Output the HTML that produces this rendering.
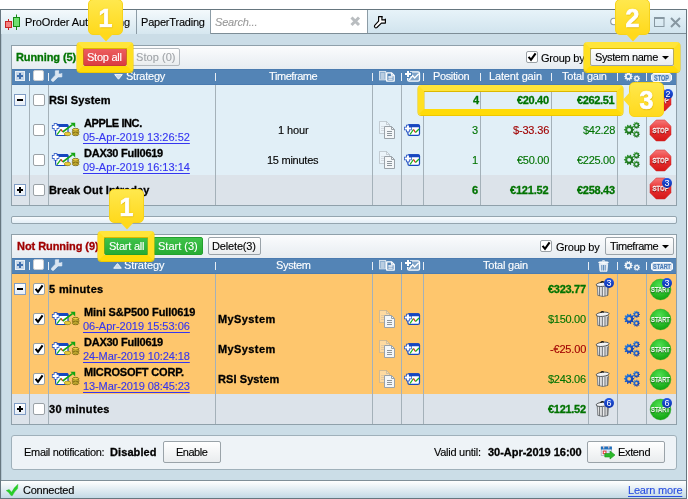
<!DOCTYPE html><html><head><meta charset="utf-8"><title>ProOrder AutoTrading</title><style>
*{box-sizing:border-box;margin:0;padding:0}
html,body{width:688px;height:499px;background:#fff;overflow:hidden}
body{font-family:"Liberation Sans",sans-serif;font-size:11px;color:#000;position:relative;line-height:13px}
.a{position:absolute}
.t{position:absolute;white-space:nowrap;line-height:13px;height:13px;-webkit-text-stroke:0.12px;will-change:transform}
.b{font-weight:bold;-webkit-text-stroke:0.3px}
.w{color:#fff}
.g{color:#007300}
.r{color:#a00000}
.lk{color:#3535f0;text-decoration:underline;text-decoration-thickness:1px;text-underline-offset:1.5px}
#win{left:0;top:9px;width:687px;height:490px;background:#cbdde7;border:1px solid #66767f}
.panel{position:absolute;border:1px solid #8fa0aa;background:#e1eff7}
.tb{position:absolute;left:0;top:0;width:100%;height:23px;background:linear-gradient(#fbfcfd,#e6ecf1)}
.hd{position:absolute;left:0;top:23px;width:100%;height:16px;background:#5384b6;border-top:1px solid #4a7bb0;border-bottom:1px solid #4a7bb0}
.row{position:absolute;left:0;width:100%;height:30px}
.cl{position:absolute;top:39px;width:1px;background:#a4b1b9}
.tick{position:absolute;width:1px;height:8px;background:#e8eef5}
.btn{position:absolute;height:18px;border:1px solid #9aa3a9;border-radius:2px;background:linear-gradient(#ffffff,#e9ecee)}
.cb{position:absolute;width:12px;height:12px;border:1px solid #9aa1a6;border-radius:2px;background:#fff}
.ex{position:absolute;width:12px;height:12px;border:1px solid #7f9cc4;background:linear-gradient(#ffffff,#e6eef8)}
.hl{position:absolute;border:6px solid #ffe022;border-top-color:#ffe53a;border-bottom-color:#ffdb08;border-radius:3.5px;box-shadow:0 0.5px 0 0.5px #efc800, inset 0 0.6px 0 0.4px #dcb800}
.co{position:absolute;width:35px;border-radius:5px;background:linear-gradient(#ffe84d,#ffd91c);border:1px solid #f7d31a;color:#fff;font-weight:bold;font-size:25px;text-align:center;text-shadow:0.5px 1px 1px #dfb400,0 0 2px #e8c000;-webkit-text-stroke:0.7px #fff}
svg{position:absolute;overflow:visible}
</style></head><body>
<svg width="0" height="0" style="position:absolute"><defs>
<linearGradient id="gStop" x1="0" y1="0" x2="0" y2="1"><stop offset="0" stop-color="#f67878"/><stop offset="0.5" stop-color="#e83030"/><stop offset="1" stop-color="#d41818"/></linearGradient>
<radialGradient id="gStart" cx="0.45" cy="0.3" r="0.75"><stop offset="0" stop-color="#4fe04f"/><stop offset="1" stop-color="#0da00d"/></radialGradient>
<linearGradient id="gBlue" x1="0" y1="0" x2="1" y2="1"><stop offset="0" stop-color="#2f93e6"/><stop offset="0.55" stop-color="#1550c4"/><stop offset="1" stop-color="#0a2a9c"/></linearGradient>
<linearGradient id="gGreen" x1="0" y1="0" x2="1" y2="1"><stop offset="0" stop-color="#3da53d"/><stop offset="0.55" stop-color="#1f7a1f"/><stop offset="1" stop-color="#0f5a0f"/></linearGradient>
<linearGradient id="gBadge" x1="0" y1="0" x2="0" y2="1"><stop offset="0" stop-color="#2458e6"/><stop offset="1" stop-color="#0b2fa8"/></linearGradient>
<linearGradient id="gCan" x1="0" y1="0" x2="1" y2="0"><stop offset="0" stop-color="#8d9195"/><stop offset="0.35" stop-color="#e6e8ea"/><stop offset="1" stop-color="#84888c"/></linearGradient>
<g id="stopsign"><polygon points="6.2,0 14.8,0 21,6.2 21,14.8 14.8,21 6.2,21 0,14.8 0,6.2" fill="url(#gStop)" stroke="#cf2424" stroke-width="0.5"/><text x="10.6" y="13.3" font-family="Liberation Sans,sans-serif" font-weight="bold" font-size="7.5" fill="#fff" stroke="#fff" stroke-width="0.35" text-anchor="middle" textLength="16" style="text-shadow:0 0.6px 0.4px #901010" lengthAdjust="spacingAndGlyphs">STOP</text></g>
<g id="startsign"><circle cx="10.5" cy="10.5" r="10.4" fill="url(#gStart)" stroke="#12a012" stroke-width="0.4"/><text x="10.5" y="13.1" font-family="Liberation Sans,sans-serif" font-weight="bold" font-size="7.8" fill="#fff" stroke="#fff" stroke-width="0.25" text-anchor="middle" textLength="18.8" style="text-shadow:0 0.6px 0.4px #087008" lengthAdjust="spacingAndGlyphs">START</text></g>
<g id="gear"><path d="M0.766,-0.146 L0.994,-0.107 L0.994,0.107 L0.766,0.146 L0.706,0.332 L0.867,0.498 L0.742,0.671 L0.534,0.569 L0.376,0.684 L0.409,0.913 L0.206,0.979 L0.098,0.774 L-0.098,0.774 L-0.206,0.979 L-0.409,0.913 L-0.376,0.684 L-0.534,0.569 L-0.742,0.671 L-0.867,0.498 L-0.706,0.332 L-0.766,0.146 L-0.994,0.107 L-0.994,-0.107 L-0.766,-0.146 L-0.706,-0.332 L-0.867,-0.498 L-0.742,-0.671 L-0.534,-0.569 L-0.376,-0.684 L-0.409,-0.913 L-0.206,-0.979 L-0.098,-0.774 L0.098,-0.774 L0.206,-0.979 L0.409,-0.913 L0.376,-0.684 L0.534,-0.569 L0.742,-0.671 L0.867,-0.498 L0.706,-0.332 Z M0.37,0 A0.37,0.37 0 1 0 -0.37,0 A0.37,0.37 0 1 0 0.37,0 Z" fill-rule="evenodd"/></g>
<g id="gearS"><path d="M0.724,-0.154 L0.993,-0.118 L0.993,0.118 L0.724,0.154 L0.653,0.347 L0.837,0.548 L0.685,0.729 L0.456,0.583 L0.277,0.686 L0.289,0.957 L0.056,0.998 L-0.026,0.740 L-0.229,0.704 L-0.394,0.919 L-0.599,0.801 L-0.495,0.550 L-0.628,0.392 L-0.893,0.451 L-0.974,0.228 L-0.733,0.103 L-0.733,-0.103 L-0.974,-0.228 L-0.893,-0.451 L-0.628,-0.392 L-0.495,-0.550 L-0.599,-0.801 L-0.394,-0.919 L-0.229,-0.704 L-0.026,-0.740 L0.056,-0.998 L0.289,-0.957 L0.277,-0.686 L0.456,-0.583 L0.685,-0.729 L0.837,-0.548 L0.653,-0.347 Z M0.34,0 A0.34,0.34 0 1 0 -0.34,0 A0.34,0.34 0 1 0 0.34,0 Z" fill-rule="evenodd"/></g>
<g id="gears"><use href="#gear" transform="translate(5.1,7.8) scale(5.2)"/><use href="#gearS" transform="translate(12.4,3.4) scale(3.6)"/><use href="#gearS" transform="translate(12.4,12.2) scale(3.6)"/></g>
<g id="copyic"><path d="M0.5,0.5 H7.5 L10.5,3.5 V12.5 H0.5 Z" fill="#fff" fill-opacity="0.35" stroke="#9aa0a6" stroke-opacity="0.45" stroke-width="1"/><path d="M7.5,0.5 V3.5 H10.5" fill="none" stroke="#9aa0a6" stroke-opacity="0.45"/><path d="M2,5.5 H5 M2,7.5 H5 M2,9.5 H5" stroke="#9aa0a6" stroke-opacity="0.3"/><path d="M5.5,5.5 H12.5 L15.5,8.5 V17.5 H5.5 Z" fill="#f4f7f9" stroke="#9aa2a9" stroke-width="1"/><path d="M12.5,5.5 V8.5 H15.5" fill="none" stroke="#9aa2a9"/><path d="M8,10.5 H13 M8,12.5 H13 M8,14.5 H13" stroke="#8e969c" stroke-width="1"/></g>
<g id="chartplus"><rect x="3.9" y="0.8" width="11.6" height="10.6" rx="1.6" fill="#fff" stroke="#1747c0" stroke-width="1.2"/><path d="M3.9,2.6 V2.2 Q3.9,0.8 5.3,0.8 H14.1 Q15.5,0.8 15.5,2.2 V2.6 Z" fill="#1747c0" stroke="#1747c0" stroke-width="1.2"/><path d="M6,10.5 L9.5,5.5" fill="none" stroke="#18b018" stroke-width="1.3"/><path d="M9.5,5.5 L11.5,8.5" fill="none" stroke="#e82020" stroke-width="1.3"/><path d="M11.5,8.5 L15,5" fill="none" stroke="#18b018" stroke-width="1.3"/><path d="M3.9,0.7 V8.3 M0.1,4.5 H7.7" stroke="#1747c0" stroke-width="3.6"/><path d="M3.9,1.4 V7.6 M0.8,4.5 H7" stroke="#fff" stroke-width="2.1"/></g>
<g id="chartcoin"><rect x="3.6" y="2.5" width="12.4" height="11" rx="1.6" fill="#fff" stroke="#1747c0" stroke-width="1.2"/><path d="M3.6,4.3 V3.9 Q3.6,2.5 5,2.5 H14.6 Q16,2.5 16,3.9 V4.3 Z" fill="#1747c0" stroke="#1747c0" stroke-width="1.2"/><path d="M5,12.7 L9,7.3" fill="none" stroke="#18b018" stroke-width="1.3"/><path d="M9,7.3 L10.7,10" fill="none" stroke="#e82020" stroke-width="1.3"/><path d="M10.7,10 L20.5,2.6" fill="none" stroke="#12a512" stroke-width="1.6"/><path d="M18.4,0.7 H23.2 V5.4 Z" fill="#12a512"/><path d="M3.6,1.2 V8.6 M-0.1,4.9 H7.3" stroke="#1747c0" stroke-width="3.6"/><path d="M3.6,1.9 V7.9 M0.6,4.9 H6.6" stroke="#fff" stroke-width="2.1"/><ellipse cx="15.5" cy="11.9" rx="3.3" ry="1.8" fill="#e9cb3a" stroke="#8f7a10" stroke-width="0.6"/><g fill="#edd040" stroke="#5f5008" stroke-width="0.7"><ellipse cx="23.6" cy="12.3" rx="3.3" ry="1.4"/><ellipse cx="23.6" cy="10.8" rx="3.3" ry="1.4"/><ellipse cx="23.6" cy="9.3" rx="3.3" ry="1.4"/><ellipse cx="23.6" cy="7.8" rx="3.3" ry="1.4"/></g></g>
<g id="trash"><path d="M1.2,4.8 H12.6 L11.9,14.4 Q6.9,16.6 1.9,14.4 Z" fill="#e9eaeb" stroke="#55595d" stroke-width="0.7"/><path d="M3.6,6 V15 M6.3,6 V15.5 M9,6 V15.4 M11.3,6 V14.6" stroke="#5a5e62" stroke-width="0.9"/><path d="M1.6,6 V14.3" stroke="#8a8e92" stroke-width="0.8"/><ellipse cx="6.6" cy="3.3" rx="6.5" ry="2.1" transform="rotate(-6 6.6 3.3)" fill="#f2f3f4" stroke="#3a3e42" stroke-width="0.8"/><path d="M4.6,1.7 Q6,-0.3 7.8,1.2" fill="none" stroke="#111" stroke-width="1.3"/></g>
<g id="wrench"><path d="M4.6,0.65 L8.3,0.65 L8.3,1.1 L7.9,1.2 L7.9,3.9 L10.8,3.9 L11.4,3.2 L11.4,7.1 L7.4,7.1 L2.9,11.5 Q1.8,12.2 0.9,11.3 Q0,10.3 0.7,9.4 L4.6,5.2 Z" stroke-linejoin="round"/></g>
<g id="tick"><path d="M1.6,4.8 L4,7.8 L8.6,1.4" fill="none" stroke="#000" stroke-width="2.1"/></g>
</defs></svg>
<div id="win" class="a">
<div class="a" style="left:0px;top:0px;width:1px;height:488px;background:#b3c6d2"></div>
<div class="a" style="left:0px;top:0px;width:685px;height:24px;background:linear-gradient(#e7f3f9,#d1e4ee);border-bottom:1px solid #7d8d96"></div>
<div class="a" style="left:0px;top:0px;width:136px;height:24px;border-right:1px solid #8c9ca6;background:linear-gradient(#f3f9fc,#d6e7f0)"></div>
<div class="a" style="left:136px;top:0px;width:74px;height:24px;border-right:1px solid #8c9ca6;background:linear-gradient(#f3f9fc,#d6e7f0)"></div>
<svg style="left:4px;top:4px" width="18" height="18"><path d="M3.5,5 V16" stroke="#c02020" stroke-width="1"/><path d="M11.5,0.5 V16" stroke="#158a15" stroke-width="1"/><rect x="0.5" y="7.5" width="6" height="6" fill="#f58080" stroke="#c82424"/><rect x="8.5" y="3.5" width="6" height="9" fill="#70e070" stroke="#158a15"/></svg>
<div class="t " style="left:23.70px;top:6px;letter-spacing:-0.105px;">ProOrder AutoTrading</div>
<div class="t " style="left:140.40px;top:6px;letter-spacing:-0.205px;">PaperTrading</div>
<div class="a" style="left:210px;top:0px;width:157px;height:23px;background:#fff;border-right:1px solid #8c9ca6"></div>
<div class="t " style="left:213.90px;top:6px;letter-spacing:-0.188px;font-style:italic;color:#9a9a9a">Search...</div>
<svg style="left:349.4px;top:6px" width="11" height="11"><path d="M1.5,1.5 L9,9 M9,1.5 L1.5,9" stroke="#b9bdc0" stroke-width="3"/></svg>
<svg style="left:373px;top:6px" width="13" height="13"><use href="#wrench" fill="#fff" stroke="#000" stroke-width="1.15"/></svg>
<svg style="left:609px;top:7px" width="10" height="10"><circle cx="4" cy="4.5" r="3.3" fill="#fff" stroke="#8a9aa4" stroke-width="1.1"/></svg>
<svg style="left:653px;top:7px" width="11" height="11"><rect x="0.5" y="1" width="9.5" height="8.5" fill="none" stroke="#8797a1" stroke-width="1"/><path d="M0,1 H10.5" stroke="#8797a1" stroke-width="2"/></svg>
<svg style="left:669px;top:7px" width="11" height="11"><path d="M1,1 L10,10 M10,1 L1,10" stroke="#8797a1" stroke-width="2"/></svg>
<div class="panel" style="left:10px;top:35px;width:666px;height:161px">
<div class="tb"></div><div class="hd"></div>
<div class="row" style="left:0px;top:39px;height:90px;background:#e1eff7"></div>
<div class="row" style="left:0px;top:129px;height:30px;background:#dce3ea"></div>
<div class="cl" style="left:17px;top:39px;height:120px;"></div>
<div class="cl" style="left:36px;top:39px;height:120px;"></div>
<div class="cl" style="left:203px;top:39px;height:120px;"></div>
<div class="cl" style="left:360px;top:39px;height:120px;"></div>
<div class="cl" style="left:389px;top:39px;height:120px;"></div>
<div class="cl" style="left:411px;top:39px;height:120px;"></div>
<div class="cl" style="left:468px;top:39px;height:120px;"></div>
<div class="cl" style="left:539px;top:39px;height:120px;"></div>
<div class="cl" style="left:605px;top:39px;height:120px;"></div>
<div class="cl" style="left:634px;top:39px;height:120px;"></div>
<div class="t b g" style="left:4.40px;top:5px;letter-spacing:-0.087px;">Running (5)</div>
<div class="btn" style="left:71px;top:2px;width:44px;height:18px;background:linear-gradient(#ec5d5f,#db3d42);border-color:#c9383c"></div>
<div class="t w" style="left:75.40px;top:5px;letter-spacing:-0.241px;">Stop all</div>
<div class="btn" style="left:119px;top:2px;width:49px;height:18px;border-color:#b4babf"></div>
<div class="t "  style="left:124.40px;top:5px;letter-spacing:0.054px;;color:#a0a4a8">Stop (0)</div>
<div class="cb" style="left:514px;top:5px;"></div>
<svg style="left:515px;top:6px" width="10" height="10"><use href="#tick"/></svg>
<div class="t " style="left:528.90px;top:6px;letter-spacing:-0.214px;">Group by</div>
<div class="btn" style="left:578px;top:2px;width:84px;height:18px;"></div>
<div class="t " style="left:582.65px;top:5px;letter-spacing:-0.400px;">System name</div>
<svg style="left:650px;top:10px" width="8" height="5"><path d="M0,0 H7 L3.5,3.6 Z" fill="#000"/></svg>
<div class="a" style="left:3px;top:25px;width:10px;height:10px;border:1px solid #e9f0f7;background:#c3d5e8"></div>
<svg style="left:3px;top:25px" width="10" height="10"><path d="M5,2 V8 M2,5 H8" stroke="#3f6fae" stroke-width="2"/></svg>
<div class="cb" style="left:21.200000000000003px;top:24.400000000000006px;width:11px;height:11px;border-color:#c9ccd0"></div>
<svg style="left:39px;top:25px" width="13" height="13"><use href="#wrench" fill="#d9e5f1" stroke="#e4edf6" stroke-width="0.7" transform="translate(0,-0.8) scale(0.95)"/></svg>
<div class="tick" style="left:17px;top:27px;"></div>
<div class="tick" style="left:36px;top:27px;"></div>
<div class="tick" style="left:203px;top:27px;"></div>
<div class="tick" style="left:360px;top:27px;"></div>
<div class="tick" style="left:389px;top:27px;"></div>
<div class="tick" style="left:411px;top:27px;"></div>
<svg style="left:367px;top:25px" width="17" height="12"><rect x="0.5" y="0.5" width="6.2" height="8.4" fill="#fff" fill-opacity="0.35" stroke="#fff" stroke-opacity="0.75" stroke-width="0.9"/><path d="M1.8,3 H5.4 M1.8,5 H5.4 M1.8,7 H5.4" stroke="#fff" stroke-opacity="0.85" stroke-width="0.9"/><path d="M7.7,1.9 H12.6 L15.2,4.5 V10.1 H7.7 Z" fill="#5283b5" stroke="#fff" stroke-width="1.3" stroke-linejoin="round"/><path d="M12.4,1.9 V4.7 H15.2" fill="none" stroke="#fff" stroke-width="1"/><path d="M9.3,6 H13.7 M9.3,8.2 H13.7" stroke="#fff" stroke-width="1.3"/></svg>
<svg style="left:392px;top:24px" width="17" height="13"><rect x="3.7" y="1.9" width="11.8" height="9.2" rx="1.4" fill="#fff" fill-opacity="0.25" stroke="#fff" stroke-width="1.3"/><path d="M5.2,10 L8.6,5.6 L10.6,8 L14.8,3.8" fill="none" stroke="#fff" stroke-width="1.3"/><path d="M4,0 V8 M0,4 H8" stroke="#5283b5" stroke-width="4"/><path d="M4,1 V7 M1,4 H7" stroke="#fff" stroke-width="2"/></svg>
<svg style="left:612px;top:26px" width="16" height="14"><g fill="#eef3f8"><use href="#gear" transform="translate(4.4,4.4) scale(4.4)"/><use href="#gear" transform="translate(12.8,6.5) scale(3.3)"/></g></svg>
<svg style="left:102px;top:28px" width="9" height="6"><path d="M0.7,0.6 H8.3 L4.5,5.2 Z" fill="#c9d9ea" stroke="#f2f6fa" stroke-width="1"/></svg>
<div class="t w" style="left:113.65px;top:24px;letter-spacing:-0.241px;">Strategy</div>
<div class="t w" style="left:256.90px;top:24px;letter-spacing:-0.430px;">Timeframe</div>
<div class="t w" style="left:421.40px;top:24px;letter-spacing:-0.375px;">Position</div>
<div class="t w" style="left:477.40px;top:24px;letter-spacing:-0.144px;">Latent gain</div>
<div class="t w" style="left:549.90px;top:24px;letter-spacing:-0.236px;">Total gain</div>
<div class="tick" style="left:468px;top:27px;"></div>
<div class="tick" style="left:539px;top:27px;"></div>
<div class="tick" style="left:605px;top:27px;"></div>
<div class="tick" style="left:634px;top:27px;"></div>
<svg style="left:639px;top:26.599999999999994px" width="21" height="9"><path d="M2.2,0.5 H18.8 L20.5,2.2 V6.8 L18.8,8.5 H2.2 L0.5,6.8 V2.2 Z" fill="#d9e4f0" stroke="#fbfcfe" stroke-width="1"/><text x="10.5" y="7.5" font-family="Liberation Sans,sans-serif" font-weight="bold" font-size="8.4" fill="#4a7cb8" stroke="#4a7cb8" stroke-width="0.2" text-anchor="middle" textLength="15" lengthAdjust="spacingAndGlyphs">STOP</text></svg>
<div class="ex" style="left:2px;top:48px;"></div>
<svg style="left:2px;top:48px" width="12" height="12"><path d="M3,6 H9" stroke="#000" stroke-width="2"/></svg>
<div class="cb" style="left:21px;top:48px;"></div>
<div class="t b" style="left:37.40px;top:48px;letter-spacing:0.111px;">RSI System</div>
<div class="t b g" style="left:460.77px;top:48px;">4</div>
<div class="t b g" style="left:505.40px;top:48px;letter-spacing:-0.325px;">&euro;20.40</div>
<div class="t b g" style="left:565.15px;top:48px;letter-spacing:-0.375px;">&euro;262.51</div>
<svg style="left:638px;top:44px" width="1" height="1"><use href="#stopsign"/></svg>
<div class="a" style="left:651px;top:43px;width:10px;height:10px;border-radius:5px;background:linear-gradient(#2458e6,#0b2fa8);color:#fff;font-size:9px;line-height:10px;text-align:center;font-weight:normal">2</div>
<div class="cb" style="left:21px;top:78px;"></div>
<svg style="left:40px;top:76px" width="1" height="1"><use href="#chartcoin"/></svg>
<div class="t b" style="left:71.65px;top:71px;letter-spacing:-0.389px;">APPLE INC.</div>
<div class="t lk" style="left:70.50px;top:85px;letter-spacing:-0.009px;">05-Apr-2019 13:26:52</div>
<svg style="left:367px;top:75px" width="1" height="1"><use href="#copyic"/></svg>
<svg style="left:392px;top:78px" width="1" height="1"><use href="#chartplus"/></svg>
<div class="t " style="left:266.15px;top:78px;letter-spacing:-0.087px;">1 hour</div>
<div class="t g" style="left:460.02px;top:78px;">3</div>
<div class="t r" style="left:500.65px;top:78px;letter-spacing:-0.177px;">$-33.36</div>
<div class="t g" style="left:570.90px;top:78px;letter-spacing:-0.275px;">$42.28</div>
<svg style="left:612px;top:76px" width="1" height="1"><use href="#gears" fill="url(#gGreen)"/></svg>
<svg style="left:638px;top:74px" width="1" height="1"><use href="#stopsign"/></svg>
<div class="cb" style="left:21px;top:108px;"></div>
<svg style="left:40px;top:106px" width="1" height="1"><use href="#chartcoin"/></svg>
<div class="t b" style="left:71.65px;top:101px;letter-spacing:-0.255px;">DAX30 Full0619</div>
<div class="t lk" style="left:70.50px;top:115px;letter-spacing:-0.009px;">09-Apr-2019 16:13:14</div>
<svg style="left:367px;top:105px" width="1" height="1"><use href="#copyic"/></svg>
<svg style="left:392px;top:108px" width="1" height="1"><use href="#chartplus"/></svg>
<div class="t " style="left:255.40px;top:108px;letter-spacing:-0.257px;">15 minutes</div>
<div class="t g" style="left:460.02px;top:108px;">1</div>
<div class="t g" style="left:504.65px;top:108px;letter-spacing:-0.275px;">&euro;50.00</div>
<div class="t g" style="left:565.15px;top:108px;letter-spacing:-0.292px;">&euro;225.00</div>
<svg style="left:612px;top:106px" width="1" height="1"><use href="#gears" fill="url(#gGreen)"/></svg>
<svg style="left:638px;top:104px" width="1" height="1"><use href="#stopsign"/></svg>
<div class="ex" style="left:2px;top:138px;"></div>
<svg style="left:2px;top:138px" width="12" height="12"><path d="M3,6 H9 M6,3 V9" stroke="#000" stroke-width="2"/></svg>
<div class="cb" style="left:21px;top:138px;"></div>
<div class="t b" style="left:37.40px;top:138px;letter-spacing:0.121px;">Break Out Intraday</div>
<div class="t b g" style="left:460.02px;top:138px;">6</div>
<div class="t b g" style="left:498.40px;top:138px;letter-spacing:-0.208px;">&euro;121.52</div>
<div class="t b g" style="left:565.15px;top:138px;letter-spacing:-0.292px;">&euro;258.43</div>
<svg style="left:638px;top:132px" width="1" height="1"><use href="#stopsign"/></svg>
<div class="a" style="left:650px;top:132px;width:10px;height:10px;border-radius:5px;background:linear-gradient(#2458e6,#0b2fa8);color:#fff;font-size:9px;line-height:10px;text-align:center;font-weight:normal">3</div>
</div>
<div class="a" style="left:10px;top:206px;width:666px;height:8px;border:1px solid #94a5af;border-radius:2px;background:linear-gradient(#f8fbfd,#e4eff7)"></div>
<div class="panel" style="left:10px;top:224px;width:666px;height:191px;background:#dce3ea">
<div class="tb"></div><div class="hd"></div>
<div class="row" style="left:0px;top:39px;height:120px;background:#fec66d"></div>
<div class="row" style="left:0px;top:159px;height:30px;background:#dce3ea"></div>
<div class="cl" style="left:17px;top:39px;height:150px;"></div>
<div class="cl" style="left:36px;top:39px;height:150px;"></div>
<div class="cl" style="left:203px;top:39px;height:150px;"></div>
<div class="cl" style="left:360px;top:39px;height:150px;"></div>
<div class="cl" style="left:389px;top:39px;height:150px;"></div>
<div class="cl" style="left:411px;top:39px;height:150px;"></div>
<div class="cl" style="left:576px;top:39px;height:150px;"></div>
<div class="cl" style="left:605px;top:39px;height:150px;"></div>
<div class="cl" style="left:634px;top:39px;height:150px;"></div>
<div class="t b r" style="left:4.50px;top:5px;letter-spacing:-0.057px;">Not Running (9)</div>
<div class="btn" style="left:92px;top:2px;width:45px;height:18px;background:linear-gradient(#3fc24a,#27ac33);border-color:#23a02e"></div>
<div class="t w" style="left:96.65px;top:5px;letter-spacing:-0.227px;">Start all</div>
<div class="btn" style="left:141px;top:2px;width:50px;height:18px;background:linear-gradient(#3fc24a,#27ac33);border-color:#23a02e"></div>
<div class="t w" style="left:146.40px;top:5px;">Start (3)</div>
<div class="btn" style="left:196px;top:2px;width:53px;height:18px;"></div>
<div class="t " style="left:200.40px;top:5px;letter-spacing:-0.156px;">Delete(3)</div>
<div class="cb" style="left:528px;top:5px;"></div>
<svg style="left:529px;top:6px" width="10" height="10"><use href="#tick"/></svg>
<div class="t " style="left:543.90px;top:6px;letter-spacing:-0.214px;">Group by</div>
<div class="btn" style="left:593px;top:2px;width:69px;height:18px;"></div>
<div class="t " style="left:597.65px;top:5px;letter-spacing:-0.430px;">Timeframe</div>
<svg style="left:650px;top:10px" width="8" height="5"><path d="M0,0 H7 L3.5,3.6 Z" fill="#000"/></svg>
<div class="a" style="left:3px;top:25px;width:10px;height:10px;border:1px solid #e9f0f7;background:#c3d5e8"></div>
<svg style="left:3px;top:25px" width="10" height="10"><path d="M5,2 V8 M2,5 H8" stroke="#3f6fae" stroke-width="2"/></svg>
<div class="cb" style="left:21.200000000000003px;top:24.399999999999977px;width:11px;height:11px;border-color:#c9ccd0"></div>
<svg style="left:39px;top:25px" width="13" height="13"><use href="#wrench" fill="#d9e5f1" stroke="#e4edf6" stroke-width="0.7" transform="translate(0,-0.8) scale(0.95)"/></svg>
<div class="tick" style="left:17px;top:27px;"></div>
<div class="tick" style="left:36px;top:27px;"></div>
<div class="tick" style="left:203px;top:27px;"></div>
<div class="tick" style="left:360px;top:27px;"></div>
<div class="tick" style="left:389px;top:27px;"></div>
<div class="tick" style="left:411px;top:27px;"></div>
<svg style="left:367px;top:25px" width="17" height="12"><rect x="0.5" y="0.5" width="6.2" height="8.4" fill="#fff" fill-opacity="0.35" stroke="#fff" stroke-opacity="0.75" stroke-width="0.9"/><path d="M1.8,3 H5.4 M1.8,5 H5.4 M1.8,7 H5.4" stroke="#fff" stroke-opacity="0.85" stroke-width="0.9"/><path d="M7.7,1.9 H12.6 L15.2,4.5 V10.1 H7.7 Z" fill="#5283b5" stroke="#fff" stroke-width="1.3" stroke-linejoin="round"/><path d="M12.4,1.9 V4.7 H15.2" fill="none" stroke="#fff" stroke-width="1"/><path d="M9.3,6 H13.7 M9.3,8.2 H13.7" stroke="#fff" stroke-width="1.3"/></svg>
<svg style="left:392px;top:24px" width="17" height="13"><rect x="3.7" y="1.9" width="11.8" height="9.2" rx="1.4" fill="#fff" fill-opacity="0.25" stroke="#fff" stroke-width="1.3"/><path d="M5.2,10 L8.6,5.6 L10.6,8 L14.8,3.8" fill="none" stroke="#fff" stroke-width="1.3"/><path d="M4,0 V8 M0,4 H8" stroke="#5283b5" stroke-width="4"/><path d="M4,1 V7 M1,4 H7" stroke="#fff" stroke-width="2"/></svg>
<svg style="left:612px;top:26px" width="16" height="14"><g fill="#eef3f8"><use href="#gear" transform="translate(4.4,4.4) scale(4.4)"/><use href="#gear" transform="translate(12.8,6.5) scale(3.3)"/></g></svg>
<svg style="left:101px;top:28px" width="9" height="6"><path d="M0.7,5.2 H8.3 L4.5,0.6 Z" fill="#c9d9ea" stroke="#f2f6fa" stroke-width="1"/></svg>
<div class="t w" style="left:112.40px;top:24px;letter-spacing:-0.062px;">Strategy</div>
<div class="t w" style="left:263.65px;top:24px;letter-spacing:-0.338px;">System</div>
<div class="t w" style="left:470.65px;top:24px;letter-spacing:-0.208px;">Total gain</div>
<div class="tick" style="left:576px;top:27px;"></div>
<div class="tick" style="left:605px;top:27px;"></div>
<div class="tick" style="left:634px;top:27px;"></div>
<svg style="left:586px;top:25px" width="12" height="12"><path d="M1.3,3.8 H9.7 L9,11.3 H2 Z" fill="#dfe8f2" stroke="#f4f8fb" stroke-width="0.8"/><path d="M3.8,5 V10.5 M5.5,5 V10.5 M7.2,5 V10.5" stroke="#5283b5" stroke-width="0.9"/><ellipse cx="5.5" cy="2.6" rx="5.3" ry="1.3" fill="#f4f8fb"/><path d="M4,1.2 Q5.5,-0.2 7,1.2" fill="none" stroke="#f4f8fb" stroke-width="1"/></svg>
<svg style="left:639px;top:27px" width="22" height="9"><path d="M2,0.5 H20 L21.5,2 V7 L20,8.5 H2 L0.5,7 V2 Z" fill="#d9e4f0" stroke="#fbfcfe" stroke-width="1"/><text x="11" y="7.4" font-family="Liberation Sans,sans-serif" font-weight="bold" font-size="7.6" fill="#4a7cb8" stroke="#4a7cb8" stroke-width="0.2" text-anchor="middle" textLength="18" lengthAdjust="spacingAndGlyphs">START</text></svg>
<div class="ex" style="left:2px;top:48px;"></div>
<svg style="left:2px;top:48px" width="12" height="12"><path d="M3,6 H9" stroke="#000" stroke-width="2"/></svg>
<div class="cb" style="left:21px;top:48px;"></div>
<svg style="left:22px;top:49px" width="10" height="10"><use href="#tick"/></svg>
<div class="t b" style="left:37.40px;top:48px;letter-spacing:0.359px;">5 minutes</div>
<div class="t b g" style="left:535.90px;top:48px;letter-spacing:-0.292px;">&euro;323.77</div>
<svg style="left:584px;top:46px" width="1" height="1"><use href="#trash"/></svg>
<div class="a" style="left:592px;top:43px;width:10px;height:10px;border-radius:5px;background:linear-gradient(#2458e6,#0b2fa8);color:#fff;font-size:9px;line-height:10px;text-align:center;font-weight:normal">3</div>
<svg style="left:638px;top:44px" width="1" height="1"><use href="#startsign"/></svg>
<div class="a" style="left:650px;top:43px;width:10px;height:10px;border-radius:5px;background:linear-gradient(#2458e6,#0b2fa8);color:#fff;font-size:9px;line-height:10px;text-align:center;font-weight:normal">3</div>
<div class="cb" style="left:21px;top:78px;"></div>
<svg style="left:22px;top:79px" width="10" height="10"><use href="#tick"/></svg>
<svg style="left:40px;top:76px" width="1" height="1"><use href="#chartcoin"/></svg>
<div class="t b" style="left:71.65px;top:71px;letter-spacing:-0.086px;">Mini S&amp;P500 Full0619</div>
<div class="t lk" style="left:70.50px;top:85px;letter-spacing:-0.009px;">06-Apr-2019 15:53:06</div>
<svg style="left:367px;top:75px" width="1" height="1"><use href="#copyic"/></svg>
<svg style="left:392px;top:78px" width="1" height="1"><use href="#chartplus"/></svg>
<div class="t b" style="left:205.65px;top:78px;letter-spacing:0.402px;">MySystem</div>
<div class="t g" style="left:535.90px;top:78px;letter-spacing:-0.292px;">$150.00</div>
<svg style="left:584px;top:76px" width="1" height="1"><use href="#trash"/></svg>
<svg style="left:612px;top:76px" width="1" height="1"><use href="#gears" fill="url(#gBlue)"/></svg>
<svg style="left:638px;top:74px" width="1" height="1"><use href="#startsign"/></svg>
<div class="cb" style="left:21px;top:108px;"></div>
<svg style="left:22px;top:109px" width="10" height="10"><use href="#tick"/></svg>
<svg style="left:40px;top:106px" width="1" height="1"><use href="#chartcoin"/></svg>
<div class="t b" style="left:71.65px;top:101px;letter-spacing:-0.255px;">DAX30 Full0619</div>
<div class="t lk" style="left:70.50px;top:115px;letter-spacing:-0.104px;">24-Mar-2019 10:24:18</div>
<svg style="left:367px;top:105px" width="1" height="1"><use href="#copyic"/></svg>
<svg style="left:392px;top:108px" width="1" height="1"><use href="#chartplus"/></svg>
<div class="t b" style="left:205.65px;top:108px;letter-spacing:0.402px;">MySystem</div>
<div class="t r" style="left:537.65px;top:108px;letter-spacing:-0.177px;">-&euro;25.00</div>
<svg style="left:584px;top:106px" width="1" height="1"><use href="#trash"/></svg>
<svg style="left:612px;top:106px" width="1" height="1"><use href="#gears" fill="url(#gBlue)"/></svg>
<svg style="left:638px;top:104px" width="1" height="1"><use href="#startsign"/></svg>
<div class="cb" style="left:21px;top:138px;"></div>
<svg style="left:22px;top:139px" width="10" height="10"><use href="#tick"/></svg>
<svg style="left:40px;top:136px" width="1" height="1"><use href="#chartcoin"/></svg>
<div class="t b" style="left:71.65px;top:131px;letter-spacing:-0.179px;">MICROSOFT CORP.</div>
<div class="t lk" style="left:70.50px;top:145px;letter-spacing:-0.104px;">13-Mar-2019 08:45:23</div>
<svg style="left:367px;top:135px" width="1" height="1"><use href="#copyic"/></svg>
<svg style="left:392px;top:138px" width="1" height="1"><use href="#chartplus"/></svg>
<div class="t b" style="left:205.65px;top:138px;letter-spacing:0.083px;">RSI System</div>
<div class="t g" style="left:535.90px;top:138px;letter-spacing:-0.292px;">$243.06</div>
<svg style="left:584px;top:136px" width="1" height="1"><use href="#trash"/></svg>
<svg style="left:612px;top:136px" width="1" height="1"><use href="#gears" fill="url(#gBlue)"/></svg>
<svg style="left:638px;top:134px" width="1" height="1"><use href="#startsign"/></svg>
<div class="ex" style="left:2px;top:168px;"></div>
<svg style="left:2px;top:168px" width="12" height="12"><path d="M3,6 H9 M6,3 V9" stroke="#000" stroke-width="2"/></svg>
<div class="cb" style="left:21px;top:168px;"></div>
<div class="t b" style="left:37.40px;top:168px;letter-spacing:0.333px;">30 minutes</div>
<div class="t b g" style="left:535.90px;top:168px;letter-spacing:-0.292px;">&euro;121.52</div>
<svg style="left:584px;top:166px" width="1" height="1"><use href="#trash"/></svg>
<div class="a" style="left:592px;top:163px;width:10px;height:10px;border-radius:5px;background:linear-gradient(#2458e6,#0b2fa8);color:#fff;font-size:9px;line-height:10px;text-align:center;font-weight:normal">6</div>
<svg style="left:638px;top:164px" width="1" height="1"><use href="#startsign"/></svg>
<div class="a" style="left:650px;top:163px;width:10px;height:10px;border-radius:5px;background:linear-gradient(#2458e6,#0b2fa8);color:#fff;font-size:9px;line-height:10px;text-align:center;font-weight:normal">6</div>
</div>
<div class="a" style="left:10px;top:425px;width:666px;height:35px;border:1px solid #9fb0ba;border-radius:3px;background:#eef3f7"></div>
<div class="t " style="left:22.65px;top:436px;letter-spacing:-0.308px;">Email notification:</div>
<div class="t b" style="left:109.40px;top:436px;letter-spacing:0.089px;">Disabled</div>
<div class="btn" style="left:162px;top:431px;width:58px;height:22px;"></div>
<div class="t " style="left:175.40px;top:436px;letter-spacing:-0.500px;">Enable</div>
<div class="t " style="left:432.90px;top:436px;letter-spacing:-0.267px;">Valid until:</div>
<div class="t b" style="left:486.65px;top:436px;letter-spacing:-0.027px;">30-Apr-2019 16:00</div>
<div class="btn" style="left:586px;top:431px;width:78px;height:22px;"></div>
<div class="t " style="left:617.40px;top:436px;letter-spacing:-0.350px;">Extend</div>
<svg style="left:599px;top:435px" width="16" height="14"><rect x="1.2" y="1.9" width="10.4" height="8.6" fill="#f4f8fc" stroke="#9aa6b4" stroke-width="0.7"/><path d="M2,6.2 H11 M2,8.3 H11 M4.2,5 V10 M6.6,5 V10 M9,5 V10" stroke="#b9d3ee" stroke-width="0.9"/><rect x="0.9" y="1.6" width="11" height="2.9" fill="#1f6fbd"/><path d="M3.7,0.7 V3.4 M8.8,0.7 V3.4" stroke="#dcc6cc" stroke-width="1.3"/><rect x="3.3" y="6.1" width="2.6" height="2.6" fill="#fff" stroke="#f03838" stroke-width="1"/><path d="M4.8,8.5 H10 V6 L15,10 L10,14 V12 H4.8 Z" fill="#2ab82a" stroke="#1a9a1a" stroke-width="0.6" stroke-linejoin="round"/></svg>
<div class="a" style="left:0px;top:470px;width:685px;height:18px;border-top:1px solid #7f8f98;background:linear-gradient(#ffffff,#c3d9e5)"></div>
<svg style="left:5px;top:474px" width="14" height="12"><path d="M0.2,6.6 L3.2,5.5 L5.6,8.3 Q8.5,3 11.9,0.3 L11.6,4.6 Q8.5,7.5 6.4,11.6 L5,11.6 Q3,8 0.2,6.6 Z" fill="#27cf27" stroke="#1fb81f" stroke-width="0.4"/></svg>
<div class="t " style="left:21.90px;top:474px;letter-spacing:-0.242px;">Connected</div>
<div class="t lk" style="left:627.40px;top:474px;letter-spacing:-0.194px;color:#2a4fe0">Learn more</div>
</div>
<div class="hl" style="left:77px;top:42px;width:56px;height:30px;"></div>
<div class="hl" style="left:584px;top:42px;width:96px;height:30px;"></div>
<div class="hl" style="left:418px;top:85px;width:205px;height:30px;"></div>
<div class="hl" style="left:98px;top:231px;width:56px;height:30px;"></div>
<div class="co" style="left:88px;top:-1px;height:36px;line-height:37px">1</div>
<svg style="left:98.5px;top:34px" width="14" height="8"><path d="M0,0 H14 L7,7.4 Z" fill="#ffd91c"/></svg>
<div class="co" style="left:615px;top:-1px;height:36px;line-height:37px">2</div>
<svg style="left:625.5px;top:34px" width="14" height="8"><path d="M0,0 H14 L7,7.4 Z" fill="#ffd91c"/></svg>
<div class="co" style="left:629px;top:82px;height:35px;line-height:35px">3</div>
<svg style="left:623px;top:92px" width="8" height="15"><path d="M7.5,-0.5 V15.5 L0.2,7.5 Z" fill="#ffdf2c"/></svg>
<div class="co" style="left:109px;top:189px;height:34px;line-height:34px">1</div>
<svg style="left:119.5px;top:222px" width="14" height="8"><path d="M0,0 H14 L7,7.4 Z" fill="#ffd91c"/></svg>
</body></html>
